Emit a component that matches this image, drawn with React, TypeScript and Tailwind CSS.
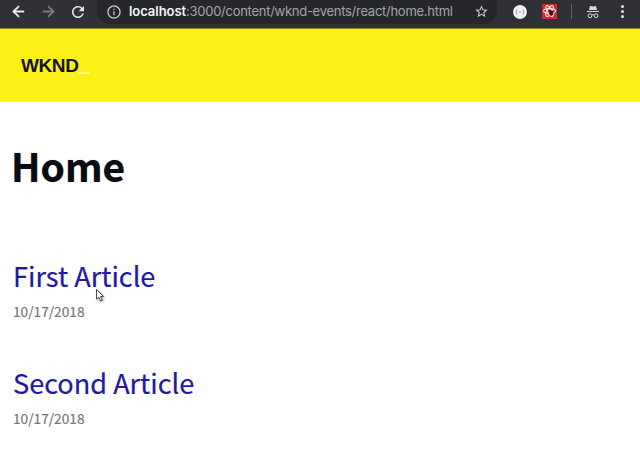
import React from 'react';
import { ArrowLeft, ArrowRight } from 'lucide-react';
import { MdRefresh, MdInfoOutline, MdStarBorder } from 'react-icons/md';

const sans = "font-['Noto_Sans_CJK_SC',sans-serif]";

function Toolbar() {
  return (
    <header className="flex h-[29px] items-start border-b border-[#8f880f] bg-[#303136] font-['Inter',sans-serif]">
      <div className="flex h-[23px] w-[97px] items-center pl-[10px] text-[#e8eaed]">
        <ArrowLeft size={17} strokeWidth={2.5} />
        <ArrowRight size={17} strokeWidth={2.5} className="ml-[13px] text-[#77797d]" />
        <MdRefresh size={18} className="ml-[12px]" />
      </div>
      <div className="flex h-[24px] w-[400px] items-center rounded-b-[13px] bg-[#26272b] pl-[9px]">
        <MdInfoOutline size={16} className="text-[#c4c6c9]" />
        <span className="ml-[7px] h-[23px] w-[345px] whitespace-nowrap text-[13px] leading-[21px] tracking-[-0.270px] text-[#a2a4a8]">
          <span className="font-semibold tracking-[-0.050px] text-[#f5f5f6]">localhost</span>:3000/content/wknd-events/react/home.html
        </span>
        <MdStarBorder size={15} className="-mt-px text-[#d0d1d3]" />
      </div>
      <div className="flex h-[23px] flex-1 items-center pl-4">
        <svg width="14" height="14" viewBox="0 0 14 14">
          <circle cx="7" cy="7" r="6.9" fill="#f4f4f4" />
          <path d="M4.600 4.500Q3.400 4.600 3.600 5.800T2.700 7Q3.800 7 3.600 8.200T4.600 9.500M9.400 4.500q1.200.1 1 1.300T11.300 7Q10.200 7 10.400 8.200T9.400 9.500M5.800 7h2.400" fill="none" stroke="#909090" strokeWidth=".8" />
        </svg>
        <svg className="ml-[15px]" width="15" height="15" viewBox="0 0 15 15">
          <path fill="#c92d2e" d="M0 0h15v15H0z" />
          <g fill="none" stroke="#f4dede" strokeWidth="1.1">
            <ellipse cx="7.500" cy="7" rx="6" ry="2.400" />
            <ellipse cx="7.500" cy="7" rx="6" ry="2.400" transform="rotate(60 7.500 7)" />
            <ellipse cx="7.500" cy="7" rx="6" ry="2.400" transform="rotate(120 7.500 7)" />
          </g>
          <path d="m7 6 4.500 1-.5 3.500-2 1.500-2-2z" fill="#431313" />
        </svg>
        <div className="ml-[14px] h-[15px] w-px bg-[#5c5d61]" />
        <svg className="ml-[14px]" width="14" height="14" viewBox="0 0 14 14">
          <path d="m4 1 3 .6L10 1l1 4H3zM1 6h12v1.100H1z" fill="#d9dadd" />
          <path d="M6 10q1-.7 2 0" fill="none" stroke="#d9dadd" />
          <circle cx="4" cy="10.700" r="1.900" fill="none" stroke="#d9dadd" />
          <circle cx="10" cy="10.700" r="1.900" fill="none" stroke="#d9dadd" />
        </svg>
        <div className="ml-[21px] flex flex-col gap-[2px]">
          <i className="size-[3px] rounded-full bg-[#e8eaed]" />
          <i className="size-[3px] rounded-full bg-[#e8eaed]" />
          <i className="size-[3px] rounded-full bg-[#e8eaed]" />
        </div>
      </div>
    </header>
  );
}

function Article({ title, date }: { title: string; date: string }) {
  return (
    <article className="h-[107px]">
      <h2 className="h-[45px] whitespace-nowrap text-[27.100px] leading-[40px] text-[#2018a8] [-webkit-text-stroke:0.2px_#2018a8]">{title}</h2>
      <p className="text-[13.700px] leading-[20px] text-[#76777a] [-webkit-text-stroke:0.2px_#76777a]">{date}</p>
    </article>
  );
}

export default function App() {
  return (
    <div className={`relative h-[466px] w-[640px] overflow-hidden bg-white ${sans}`}>
      <Toolbar />
      <div className="flex h-[73px] items-start border-b border-[#eee9a0] bg-[#fbf116] pl-[21px] pt-[26px]">
        <span className="font-['Liberation_Sans',sans-serif] text-[19px] font-bold leading-[21px] tracking-[-0.400px] text-[#14140b]">WKND</span>
        <span className="mt-[17px] h-[2px] w-[10px] bg-[#fcf8a0]" />
      </div>
      <main className="pl-[13px]">
        <h1 className="-ml-[2px] h-[154px] pt-[33px] text-[39px] font-bold leading-[60px] text-[#080b12] [text-shadow:0_0_1px_#777]">Home</h1>
        <Article title="First Article" date="10/17/2018" />
        <Article title="Second Article" date="10/17/2018" />
      </main>
      <svg className="absolute left-[95px] top-[288px] drop-shadow-[1px_1px_1px_rgba(0,0,0,0.35)]" width="11" height="16" viewBox="0 0 12 18">
        <path d="M1.500 1.500v11l2.500-2.300 2 4.500 2-.9-2-4.300h3.300z" fill="#fff" stroke="#333" strokeWidth="1" />
      </svg>
    </div>
  );
}
